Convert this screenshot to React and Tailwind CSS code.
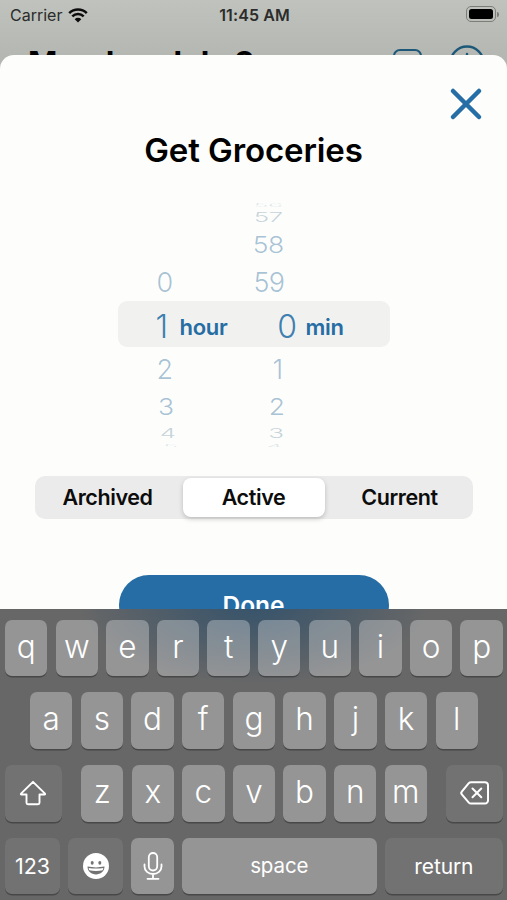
import React, { useState } from "react";
import { LuX } from "react-icons/lu";

// Rows of the wheel, from the top edge to the bottom edge
const rowStyles = [
  "h-1 text-[25px] scale-y-[0.2] text-[#5b7f9c]/20",
  "h-[21px] text-[26px] scale-y-[0.52] text-[#5b7f9c]/35",
  "h-[33px] text-[26.5px] scale-y-[0.85] text-[#3f78a8]/45",
  "h-[42px] text-[27px] text-[#3f78a8]/45",
  "h-[45px] pt-[2px] text-[32px] text-[#2670a8]/90",
  "h-[42px] text-[27px] text-[#3f78a8]/45",
  "h-[33px] text-[26.5px] scale-y-[0.85] text-[#3f78a8]/45",
  "h-[21px] text-[26px] scale-y-[0.52] text-[#5b7f9c]/35",
  "h-1 text-[25px] scale-y-[0.2] text-[#5b7f9c]/20",
];

const hours = [
  { value: "" },
  { value: "" },
  { value: "" },
  { value: "0", shift: "pr-[5px]" },
  { value: "1", shift: "pr-[10px]" },
  { value: "2", shift: "pr-[5px]" },
  { value: "3", shift: "pr-[4px]" },
  { value: "4", shift: "pr-[2px]" },
  { value: "5", shift: "pr-0" },
];

const minutes = [
  { value: "56", shift: "pr-[15px]" },
  { value: "57", shift: "pr-[15px]" },
  { value: "58", shift: "pr-[14px]" },
  { value: "59", shift: "pr-[13px]" },
  { value: "0", shift: "pr-px" },
  { value: "1", shift: "pr-[15px]" },
  { value: "2", shift: "pr-[13px]" },
  { value: "3", shift: "pr-[14px]" },
  { value: "4", shift: "pr-[16px]" },
];

const tabs = ["Archived", "Active", "Current"];

function StatusBar() {
  return (
    <div className="grid grid-cols-3 items-center h-[30px] pl-[10px] pr-[8px] text-[16px] text-[#2b2c2b]">
      <div className="flex items-center gap-[6px]">
        <span>Carrier</span>
        <svg width="20" height="15" viewBox="0 0 20 15" fill="none">
          <path
            d="M1.2 5.2a12.6 12.6 0 0 1 17.6 0M4.3 8.4a8.2 8.2 0 0 1 11.4 0"
            stroke="#0c0c0c"
            strokeWidth="2.5"
          />
          <path d="M10 14.6 6.7 11.2a4.7 4.7 0 0 1 6.6 0z" fill="#0c0c0c" />
        </svg>
      </div>
      <span className="text-center font-semibold tracking-[0.1px] whitespace-nowrap">
        11:45 AM
      </span>
      <div className="flex items-center justify-end -mt-[2px]">
        <div className="w-[30px] h-4 p-[2px] rounded-[5px] border border-[#7b7d79]">
          <div className="h-full rounded-[2.5px] bg-black" />
        </div>
        <div className="w-[2px] h-[5px] ml-px rounded-r-full bg-[#7b7d79]" />
      </div>
    </div>
  );
}

function PageHeader() {
  return (
    <div className="flex items-start h-[25px] pl-[28px] pr-[22px] overflow-hidden">
      <h1 className="mt-[13px] text-[31.5px] leading-[40px] font-bold tracking-[-0.6px] text-black whitespace-nowrap">
        Monday, July 3
      </h1>
      <div className="flex items-start ml-auto text-[#1d5879]">
        <div className="w-[29px] h-[29px] mt-[19px] mr-[27px] rounded-[7px] border-2 border-current" />
        <svg
          className="mt-[15px]"
          width="36"
          height="36"
          viewBox="0 0 36 36"
          fill="none"
          stroke="currentColor"
          strokeWidth="2.4"
          strokeLinecap="round"
        >
          <circle cx="18" cy="18" r="16.5" />
          <path d="M18 9v18M9 18h18" />
        </svg>
      </div>
    </div>
  );
}

function WheelColumn({ items, className }) {
  return (
    <div className={`flex flex-col font-[350] ${className}`}>
      {items.map((item, index) => (
        <div
          key={index}
          className={`flex items-center justify-end leading-none tracking-[-0.6px] ${rowStyles[index]} ${item.shift || ""}`}
        >
          {item.value}
        </div>
      ))}
    </div>
  );
}

function TimePicker() {
  return (
    <div className="grid justify-center mt-[28px] h-[246px] overflow-hidden">
      <div className="col-start-1 row-start-1 mt-[100px] w-[272px] h-[46px] rounded-[9px] bg-[#f1f1f0]" />
      <div className="col-start-1 row-start-1 flex items-center w-[272px] pt-[2px] text-[22px] font-semibold text-[#266da3]">
        <WheelColumn items={hours} className="w-[60px]" />
        <span className="w-[50px] ml-[2px] mt-[4px] tracking-[-0.3px]">hour</span>
        <WheelColumn items={minutes} className="w-[68px]" />
        <span className="ml-[8px] mt-[4px] tracking-[-0.3px]">min</span>
      </div>
    </div>
  );
}

function SegmentedControl() {
  const [active, setActive] = useState("Active");

  return (
    <div className="grid grid-cols-3 w-[438px] h-[43px] mx-auto mt-[29px] p-[2px] gap-[4px] rounded-[10px] bg-[#ebebeb]">
      {tabs.map((tab) => (
        <button
          key={tab}
          onClick={() => setActive(tab)}
          className={`rounded-[8px] text-[21.5px] font-semibold tracking-[-0.4px] text-[#0c0c0c] ${
            active === tab ? "bg-white shadow-[0_2px_5px_rgba(0,0,0,0.2)]" : ""
          }`}
        >
          {tab}
        </button>
      ))}
    </div>
  );
}

function Key({ children, dark, className }) {
  return (
    <button
      className={`flex items-center justify-center h-[56.7px] rounded-[7px] text-white shadow-[0_1.5px_0_rgba(0,0,0,0.3)] ${
        dark ? "bg-white/8" : "bg-white/30"
      } ${className}`}
    >
      {children}
    </button>
  );
}

function LetterKeys({ letters }) {
  return letters.split("").map((letter) => (
    <Key
      key={letter}
      className="w-[42.4px] pb-[3px] text-[31.5px] leading-none font-[350]"
    >
      {letter}
    </Key>
  ));
}

function Keyboard() {
  return (
    <div className="h-[291px] pl-[5px] pr-[4px] pt-[10.5px] flex flex-col gap-4 bg-[#676767] bg-[radial-gradient(ellipse_175px_80px_at_254px_-5px,#36536b_0%,rgba(65,87,105,0.8)_40%,rgba(103,103,103,0)_100%)]">
      <div className="flex justify-between">
        <LetterKeys letters="qwertyuiop" />
      </div>
      <div className="flex justify-between px-[25px]">
        <LetterKeys letters="asdfghjkl" />
      </div>
      <div className="flex justify-between">
        <Key dark className="w-[56.5px]">
          <svg width="28" height="26" viewBox="0 0 28 26" fill="none">
            <path
              d="M14 1.8 26 13.7q.5.8-.5.8H20.5v8.2q0 1.5-1.5 1.5H9q-1.5 0-1.5-1.5v-8.2H2.5q-1 0-.5-.8z"
              stroke="white"
              strokeWidth="1.9"
              strokeLinejoin="round"
            />
          </svg>
        </Key>
        <div className="flex gap-[8.2px]">
          <LetterKeys letters="zxcvbnm" />
        </div>
        <Key dark className="w-[56.5px]">
          <svg
            width="30"
            height="24"
            viewBox="0 0 30 24"
            fill="none"
            stroke="white"
            strokeWidth="2"
            strokeLinecap="round"
            strokeLinejoin="round"
          >
            <path d="M11 1.2h14a3 3 0 0 1 3 3v15.3a3 3 0 0 1-3 3H11q-1.3 0-2.2-.9L1.8 13.3q-1.2-1.3 0-2.6l7-8.6q.9-.9 2.2-.9z" />
            <path d="m12.5 7.5 8.8 8.8M21.3 7.5l-8.8 8.8" />
          </svg>
        </Key>
      </div>
      <div className="flex justify-between text-[21px] tracking-[-0.1px]">
        <Key dark className="w-[55px] pt-px text-[21.5px]">
          123
        </Key>
        <Key dark className="w-[55.5px]">
          <svg width="26" height="26" viewBox="0 0 26 26">
            <circle cx="13" cy="13" r="13" fill="white" />
            <ellipse cx="9.2" cy="9.8" rx="1.5" ry="1.9" fill="#727272" />
            <ellipse cx="16.8" cy="9.8" rx="1.5" ry="1.9" fill="#727272" />
            <path
              d="M4.5 13.6q8.5 1.6 17 0c0 5-4 7.9-8.5 7.9s-8.5-2.9-8.5-7.9z"
              fill="#727272"
            />
            <path d="M5.6 15q7.4 1.1 14.8 0l-.7 2.3q-6.7 1.3-13.4 0z" fill="white" />
          </svg>
        </Key>
        <Key className="w-[42.4px]">
          <svg
            width="20"
            height="28"
            viewBox="0 0 20 28"
            fill="none"
            stroke="white"
            strokeWidth="1.8"
            strokeLinecap="round"
          >
            <rect x="5.8" y="1" width="8.4" height="17.5" rx="4.2" />
            <path d="M1.5 12.5v2a8.5 7.5 0 0 0 17 0v-2M10 22v4.5M4.5 26.8h11" />
          </svg>
        </Key>
        <Key className="w-[195px] pt-px text-[20.5px]">space</Key>
        <Key dark className="w-[118.3px] pt-px text-[21px]">
          return
        </Key>
      </div>
    </div>
  );
}

function App() {
  return (
    <div className="w-[507px] h-[900px] flex flex-col overflow-hidden bg-[#b5b7b2] bg-[linear-gradient(#c0c3bd,#b4b6b1_60px)] font-['Inter',sans-serif]">
      <StatusBar />
      <PageHeader />

      {/* Task sheet */}
      <main className="h-[554px] rounded-t-[14px] bg-[#fdfefb] overflow-hidden">
        <div className="flex justify-end pt-[23px] pr-[15px]">
          <button>
            <LuX className="w-[52px] h-[52px] text-[#266ea6]" strokeWidth={2.1} />
          </button>
        </div>
        <h2 className="-mt-[3px] text-center text-[33px] leading-[46px] font-semibold tracking-[-0.1px] text-black">
          Get Groceries
        </h2>
        <TimePicker />
        <SegmentedControl />
        <button className="block w-[270px] h-[60px] mx-auto mt-[56px] pt-px rounded-[30px] bg-[#266da6] text-white text-[24.5px] font-semibold">
          Done
        </button>
      </main>

      <Keyboard />
    </div>
  );
}

export default App;
